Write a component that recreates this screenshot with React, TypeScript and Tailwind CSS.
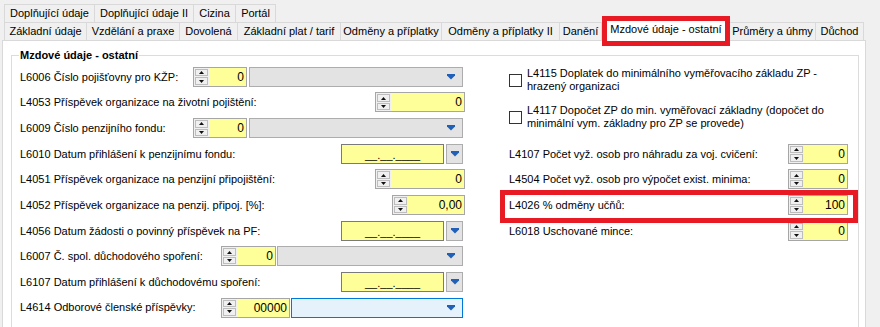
import React from 'react'

// ============================================================================
// Small widgets
// ============================================================================

function BlueArrow() {
  return (
    <svg width="8" height="6" viewBox="0 0 8 6">
      <path d="M0 0h8v1.5L4 5.5 0 1.5z" fill="#2160b8" />
    </svg>
  )
}

function SpinButtons() {
  return (
    <div className="flex w-[15px] flex-col gap-px bg-[#f0f0f0] p-px">
      <div className="flex flex-1 items-center justify-center border border-[#bdbdbd] bg-[#f0f0f0]">
        <svg width="5" height="3" viewBox="0 0 5 3">
          <path d="M0 3h5L2.5 0z" fill="#111" />
        </svg>
      </div>
      <div className="flex flex-1 items-center justify-center border border-[#bdbdbd] bg-[#f0f0f0]">
        <svg width="5" height="3" viewBox="0 0 5 3">
          <path d="M0 0h5L2.5 3z" fill="#111" />
        </svg>
      </div>
    </div>
  )
}

interface SpinProps {
  width: string
  value: string
}

function Spin({ width, value }: SpinProps) {
  return (
    <div className={`flex h-[20px] shrink-0 border border-[#a6a6a6] bg-[#ffff99] ${width}`}>
      <SpinButtons />
      <div className="flex-1 pr-[2px] text-right text-[12px] leading-[18px]">{value}</div>
    </div>
  )
}

function Combo({ width, active }: { width: string; active?: boolean }) {
  return (
    <div
      className={`flex h-[20px] shrink-0 items-center justify-end border pr-[7px] ${width} ${
        active ? 'border-[#0078d7] bg-[#e5f1fb]' : 'border-[#adadad] bg-[#e3e3e3]'
      }`}
    >
      <BlueArrow />
    </div>
  )
}

function DateField() {
  return (
    <div className="mr-[2px] flex gap-[2px]">
      <div className="h-[20px] w-[103px] border border-[#7a7a7a] bg-[#ffff99] pt-[3px] text-center leading-[14px]">
        __.__.____
      </div>
      <div className="flex h-[20px] w-[17px] items-center justify-center border border-[#adadad] bg-[#e3e3e3]">
        <BlueArrow />
      </div>
    </div>
  )
}

function Row({ label, children }: { label: string; children: React.ReactNode }) {
  return (
    <div className="flex h-[25.67px] items-center justify-between">
      <span className="whitespace-nowrap">{label}</span>
      {children}
    </div>
  )
}

function CheckItem({ lines }: { lines: [string, string] }) {
  return (
    <div className="flex items-center gap-[5px]">
      <div className="h-[13px] w-[13px] shrink-0 border border-[#333] bg-white" />
      <div className="leading-[13px]">
        {lines[0]}
        <br />
        {lines[1]}
      </div>
    </div>
  )
}

// ============================================================================
// Tabs
// ============================================================================

const topTabs = [
  { label: 'Doplňující údaje', w: 'w-[90px]' },
  { label: 'Doplňující údaje II', w: 'w-[99px]' },
  { label: 'Cizina', w: 'w-[42px]' },
  { label: 'Portál', w: 'w-[40px]' },
]

const bottomTabs = [
  { label: 'Základní údaje', w: 'w-[82px]' },
  { label: 'Vzdělání a praxe', w: 'w-[93px]' },
  { label: 'Dovolená', w: 'w-[58px]' },
  { label: 'Základní plat / tarif', w: 'w-[103px]' },
  { label: 'Odměny a příplatky', w: 'w-[101px]' },
  { label: 'Odměny a příplatky II', w: 'w-[118px]' },
  { label: 'Danění', w: 'w-[42px]' },
  { label: 'Mzdové údaje - ostatní', w: 'w-[128px]', selected: true },
  { label: 'Průměry a úhmy', w: 'w-[86px]' },
  { label: 'Důchod', w: 'w-[48px]' },
]

function Tabs() {
  return (
    <div className="pl-[4px] pt-[4px]">
      <div className="flex h-[18px] w-fit border-l border-[#d9d9d9]">
        {topTabs.map((t) => (
          <div
            key={t.label}
            className={`flex items-center justify-center border-r border-t border-[#d9d9d9] ${t.w}`}
          >
            {t.label}
          </div>
        ))}
      </div>
      <div className="relative z-10 flex h-[18px] w-fit items-end border-l border-[#d9d9d9]">
        {bottomTabs.map((t) =>
          t.selected ? (
            <div
              key={t.label}
              className={`relative -mb-px flex h-[24px] items-center justify-center border-x border-t border-[#d9d9d9] bg-white ${t.w}`}
            >
              {t.label}
              {/* highlight annotation */}
              <div className="pointer-events-none absolute -bottom-[5px] -left-[1px] -right-[1px] -top-[2px] border-[5px] border-[#e81b24]" />
            </div>
          ) : (
            <div
              key={t.label}
              className={`flex h-[18px] items-center justify-center border-r border-t border-[#d9d9d9] ${t.w}`}
            >
              {t.label}
            </div>
          )
        )}
      </div>
    </div>
  )
}

// ============================================================================
// App
// ============================================================================

export default function App() {
  return (
    <div className="h-[327px] w-[880px] overflow-hidden bg-[#f0f0f0] font-['Liberation_Sans',Arial,sans-serif] text-[11px] text-black">
      <Tabs />

      <div className="ml-[2px] h-[400px] w-[864px] border border-[#d9d9d9] bg-white">
        <fieldset className="ml-[8px] mr-[6px] mt-[8px] border border-[#dcdcdc] pb-[20px] pl-[7px] pr-[8px]">
          <legend className="px-[1px] font-bold leading-[13px]">Mzdové údaje - ostatní</legend>

          <div className="ml-[1px] grid grid-cols-[445px_339px] gap-x-[44px] pt-[2px]">
            {/* left column */}
            <div className="flex flex-col">
              <Row label="L6006 Číslo pojišťovny pro KŽP:">
                <div className="mr-[2px] flex gap-[2px]">
                  <Spin width="w-[54px]" value="0" />
                  <Combo width="w-[214px]" />
                </div>
              </Row>
              <Row label="L4053 Příspěvek organizace na životní pojištění:">
                <Spin width="w-[90px]" value="0" />
              </Row>
              <Row label="L6009 Číslo penzijního fondu:">
                <div className="mr-[2px] flex gap-[2px]">
                  <Spin width="w-[54px]" value="0" />
                  <Combo width="w-[214px]" />
                </div>
              </Row>
              <Row label="L6010 Datum přihlášení k penzijnímu fondu:">
                <DateField />
              </Row>
              <Row label="L4051 Příspěvek organizace na penzijní připojištění:">
                <Spin width="w-[90px]" value="0" />
              </Row>
              <Row label="L4052 Příspěvek organizace na penzij. připoj. [%]:">
                <Spin width="w-[73px]" value="0,00" />
              </Row>
              <Row label="L4056 Datum žádosti o povinný příspěvek na PF:">
                <DateField />
              </Row>
              <Row label="L6007 Č. spol. důchodového spoření:">
                <div className="mr-[2px] flex gap-[1px]">
                  <Spin width="w-[55px]" value="0" />
                  <Combo width="w-[186px]" />
                </div>
              </Row>
              <Row label="L6107 Datum přihlášení k důchodovému spoření:">
                <DateField />
              </Row>
              <Row label="L4614 Odborové členské příspěvky:">
                <div className="mr-[2px] flex gap-[1px]">
                  <Spin width="w-[69px]" value="00000" />
                  <Combo width="w-[172px]" active />
                </div>
              </Row>
            </div>

            {/* right column */}
            <div className="flex flex-col">
              <div className="flex h-[77px] flex-col gap-[11px] pt-[3px]">
                <CheckItem
                  lines={['L4115 Doplatek do minimálního vyměřovacího základu ZP -', 'hrazený organizaci']}
                />
                <CheckItem
                  lines={[
                    'L4117 Dopočet ZP do min. vyměřovací základny (dopočet do',
                    'minimální vym. základny pro ZP se provede)',
                  ]}
                />
              </div>
              <Row label="L4107 Počet vyž. osob pro náhradu za voj. cvičení:">
                <Spin width="w-[60px]" value="0" />
              </Row>
              <Row label="L4504 Počet vyž. osob pro výpočet exist. minima:">
                <Spin width="w-[60px]" value="0" />
              </Row>
              <div className="relative">
                <Row label="L4026 % odměny učňů:">
                  <Spin width="w-[60px]" value="100" />
                </Row>
                {/* highlight annotation */}
                <div className="pointer-events-none absolute -bottom-[5px] -left-[9px] -right-[10px] -top-[2px] border-[5px] border-[#e81b24]" />
              </div>
              <Row label="L6018 Uschované mince:">
                <Spin width="w-[60px]" value="0" />
              </Row>
            </div>
          </div>
        </fieldset>
      </div>
    </div>
  )
}
